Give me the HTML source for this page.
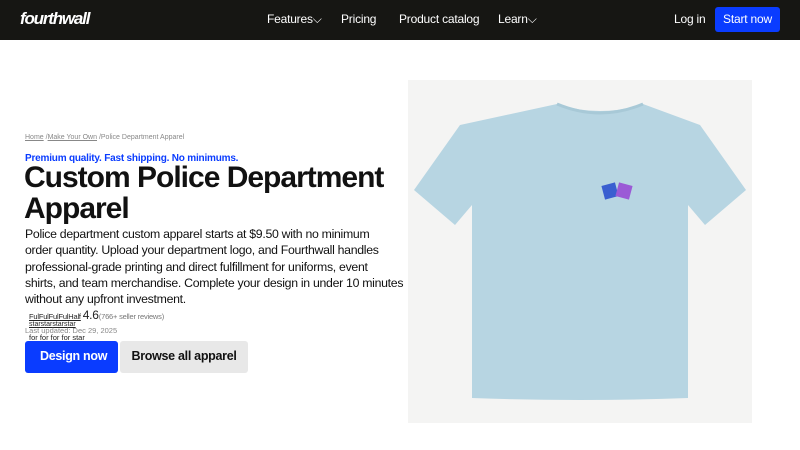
<!DOCTYPE html>
<html><head><style>
*{margin:0;padding:0;box-sizing:border-box}
body{width:800px;height:450px;background:#fff;font-family:"Liberation Sans",sans-serif;position:relative;overflow:hidden}
.nav{position:absolute;left:0;top:0;width:800px;height:40px;background:#161613;color:#fff}
.nav span{position:absolute;top:12px;font-size:12px;letter-spacing:-0.2px}
.logo{position:absolute;left:20px;top:9px;font-size:17px;font-weight:bold;font-style:italic;letter-spacing:-1.2px;color:#fff}
.start{position:absolute;left:715px;top:7px;width:65px;height:25px;background:#0a3cff;border-radius:3px;color:#fff;font-size:12px;text-align:center;line-height:25px;letter-spacing:-0.2px}
.a{position:absolute;white-space:nowrap}
</style></head><body>
<div class="nav">
<div class="logo">fourthwall</div>
<span style="left:267px">Features⌵</span>
<span style="left:341px">Pricing</span>
<span style="left:399px">Product catalog</span>
<span style="left:498px">Learn⌵</span>
<span style="left:674px">Log in</span>
<div class="start">Start now</div>
</div>
<div class="a" style="left:25px;top:134px;font-size:7px;color:#888"><u>Home</u> /<u>Make Your Own</u> /Police Department Apparel</div>
<div class="a" style="left:25px;top:153px;font-size:10px;font-weight:bold;color:#0a3cff;letter-spacing:-0.2px">Premium quality. Fast shipping. No minimums.</div>
<div class="a" style="left:24px;top:162px;font-size:30px;line-height:31px;font-weight:bold;color:#111;letter-spacing:-1px">Custom Police Department<br>Apparel</div>
<div class="a" style="left:25px;top:226px;font-size:12.3px;line-height:16.3px;color:#111;letter-spacing:-0.3px">Police department custom apparel starts at $9.50 with no minimum<br>order quantity. Upload your department logo, and Fourthwall handles<br>professional-grade printing and direct fulfillment for uniforms, event<br>shirts, and team merchandise. Complete your design in under 10 minutes<br>without any upfront investment.</div>
<div class="a" style="left:29px;top:308px;font-size:7.5px;color:#222;letter-spacing:-0.2px"><u>FulFulFulFulHalf</u> <span style="font-size:12px">4.6</span><span style="color:#777">(766+ seller reviews)</span></div>
<div class="a" style="left:29px;top:321px;font-size:7px;color:#222"><u>starstarstarstar</u></div>
<div class="a" style="left:25px;top:326px;font-size:7.5px;color:#888">Last updated: Dec 29, 2025</div>
<div class="a" style="left:29px;top:333px;font-size:7.5px;color:#222">for for for for star</div>
<div class="a" style="left:25px;top:341px;width:93px;height:32px;background:#0a3cff;border-radius:3px;color:#fff;font-size:12.5px;font-weight:bold;line-height:30px;padding-left:15px;letter-spacing:-0.3px">Design now</div>
<div class="a" style="left:120px;top:341px;width:128px;height:32px;background:#e8e8e8;border-radius:3px;color:#111;font-size:12.5px;font-weight:bold;line-height:30px;text-align:center;letter-spacing:-0.3px">Browse all apparel</div>
<div class="a" style="left:408px;top:80px;width:344px;height:343px;background:#f4f4f3"></div>
<svg class="a" style="left:408px;top:80px" width="344" height="343" viewBox="408 80 344 343">
<path d="M557 104 Q600 118 643 104 L700 125 L746 190 L705 225 L688 205 L688 398 Q580 402 472 398 L472 205 L455 225 L414 190 L460 125 Z" fill="#b7d5e2"/>
<path d="M557 104 Q600 122 643 104" fill="none" stroke="#a8c9d7" stroke-width="3"/>
<rect x="603" y="184" width="14" height="14" fill="#3a5fd0" transform="rotate(-15 610 191)"/>
<rect x="617" y="184" width="14" height="14" fill="#9b5ad6" transform="rotate(15 624 191)"/>
</svg>
</body></html>
